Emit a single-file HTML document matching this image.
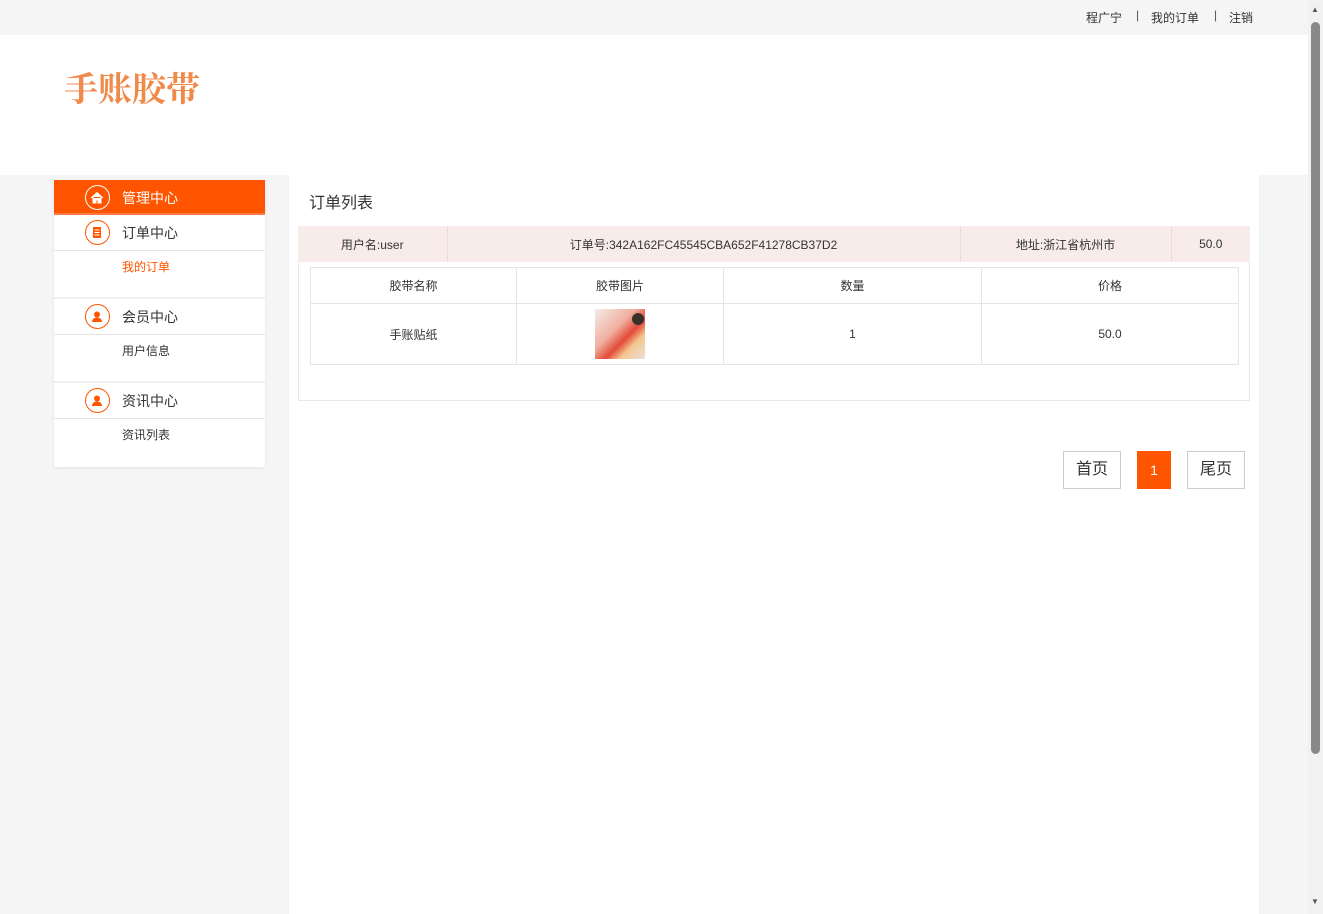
<!DOCTYPE html><html><head><meta charset="utf-8"><style>
*{margin:0;padding:0;box-sizing:border-box}
body{width:1323px;height:914px;overflow:hidden;background:#f5f5f5;font-family:"Liberation Sans","Microsoft YaHei","Noto Sans CJK SC",sans-serif;font-size:12px;color:#333;position:relative}
.a{position:absolute}
.top{left:0;top:0;width:1308px;height:35px;font-size:12px}
.hdr{left:0;top:35px;width:1308px;height:140px;background:#fff}
.logo{left:64px;top:62px;font-family:"Noto Serif CJK SC",serif;font-size:34px;color:#f08a4b;font-weight:bold;letter-spacing:0}
.side{left:54px;top:180px;width:211px;height:287px;background:#fff;box-shadow:0 1px 3px rgba(0,0,0,.08)}
.it{position:absolute;left:0;width:211px;height:36px;font-size:14px;line-height:36px;padding-left:68px;border-bottom:1px solid #e5e5e5}
.ic{position:absolute;left:31px;top:5px;width:25px;height:25px;border:1.5px solid #ff5400;border-radius:50%;background:#fff}
.sub{position:absolute;left:68px;font-size:12px}
.main{left:289px;top:175px;width:970px;height:739px;background:#fff}
table{border-collapse:collapse;position:absolute}
td{text-align:center;font-size:12px;color:#333}
.btn{top:451px;height:38px;border:1px solid #ccc;background:#fff;font-size:16px;line-height:36px;text-align:center;color:#333}
</style></head><body>
<div class="a top"><span class="a" style="left:1086px;top:9px">程广宁</span><span class="a" style="left:1136px;top:8px;color:#555">|</span><span class="a" style="left:1151px;top:9px">我的订单</span><span class="a" style="left:1214px;top:8px;color:#555">|</span><span class="a" style="left:1229px;top:9px">注销</span></div>
<div class="a hdr"></div>
<div class="a logo">手账胶带</div>
<div class="a side">
<div class="it" style="top:0;height:35px;background:#ff5400;color:#fff;border-bottom:2px solid #ff7a40"><div class="ic" style="background:#ff5400;border-color:#fff"><svg width="22" height="22" viewBox="0 0 22 22"><path d="M5 11 L11 5.5 L17 11 M7 10 V16 H10 V13 H12 V16 H15 V10" fill="#fff" stroke="#fff" stroke-width="1"/></svg></div>管理中心</div>
<div class="it" style="top:35px;height:36px"><div class="ic"><svg width="22" height="22" viewBox="0 0 22 22"><rect x="7" y="5" width="8" height="11" fill="#ff5400"/><path d="M8.5 8h5M8.5 10.5h5M8.5 13h5" stroke="#fff" stroke-width="1"/></svg></div>订单中心</div>
<div class="sub" style="top:78px;color:#ff5400">我的订单</div>
<div style="position:absolute;top:117px;left:0;width:211px;height:2px;background:#f0f0f0"></div>
<div class="it" style="top:119px"><div class="ic"><svg width="22" height="22" viewBox="0 0 22 22"><circle cx="11" cy="8.5" r="3" fill="#ff5400"/><path d="M6 16c0-3 2.5-4.5 5-4.5s5 1.5 5 4.5z" fill="#ff5400"/></svg></div>会员中心</div>
<div class="sub" style="top:162px">用户信息</div>
<div style="position:absolute;top:201px;left:0;width:211px;height:2px;background:#f0f0f0"></div>
<div class="it" style="top:203px"><div class="ic"><svg width="22" height="22" viewBox="0 0 22 22"><circle cx="11" cy="8.5" r="3" fill="#ff5400"/><path d="M6 16c0-3 2.5-4.5 5-4.5s5 1.5 5 4.5z" fill="#ff5400"/></svg></div>资讯中心</div>
<div class="sub" style="top:246px">资讯列表</div>
</div>
<div class="a main"></div>
<div class="a" style="left:309px;top:189px;font-size:16px">订单列表</div>
<div class="a" style="left:298px;top:226px;width:952px;height:175px;border:1px solid #e8e8e8;background:#fff"></div>
<table style="left:298px;top:226px;width:952px;height:36px;background:#f7ece9">
<tr><td style="width:149px;border-right:1px solid #eaddd8">用户名:user</td><td style="width:513px;border-right:1px solid #eaddd8">订单号:342A162FC45545CBA652F41278CB37D2</td><td style="width:211px;border-right:1px solid #eaddd8">地址:浙江省杭州市</td><td>50.0</td></tr></table>
<table style="left:310px;top:267px;width:929px">
<tr style="height:36px"><td style="width:206px;border:1px solid #e5e5e5">胶带名称</td><td style="width:207px;border:1px solid #e5e5e5">胶带图片</td><td style="width:258px;border:1px solid #e5e5e5">数量</td><td style="border:1px solid #e5e5e5">价格</td></tr>
<tr style="height:61px"><td style="border:1px solid #e5e5e5">手账贴纸</td><td style="border:1px solid #e5e5e5"><div style="width:50px;height:50px;margin:0 auto;background:linear-gradient(135deg,#f3ede8 0%,#f0b0a0 40%,#e34a3a 60%,#f4c890 75%,#e8e0da 100%);position:relative"><div style="position:absolute;right:1px;top:4px;width:12px;height:12px;border-radius:50%;background:#3a302a"></div></div></td><td style="border:1px solid #e5e5e5">1</td><td style="border:1px solid #e5e5e5">50.0</td></tr></table>
<div class="a btn" style="left:1063px;width:58px">首页</div>
<div class="a btn" style="left:1137px;width:34px;background:#ff5400;border-color:#ff5400;color:#fff;font-size:14px">1</div>
<div class="a btn" style="left:1187px;width:58px">尾页</div>
<div class="a" style="left:1308px;top:0;width:15px;height:914px;background:#f1f1f1"></div>
<div class="a" style="left:1311px;top:22px;width:9px;height:732px;background:#888;border-radius:5px"></div>
<div class="a" style="left:1311px;top:5px;font-size:8px;color:#555">▲</div>
<div class="a" style="left:1311px;top:897px;font-size:8px;color:#555">▼</div>
</body></html>
